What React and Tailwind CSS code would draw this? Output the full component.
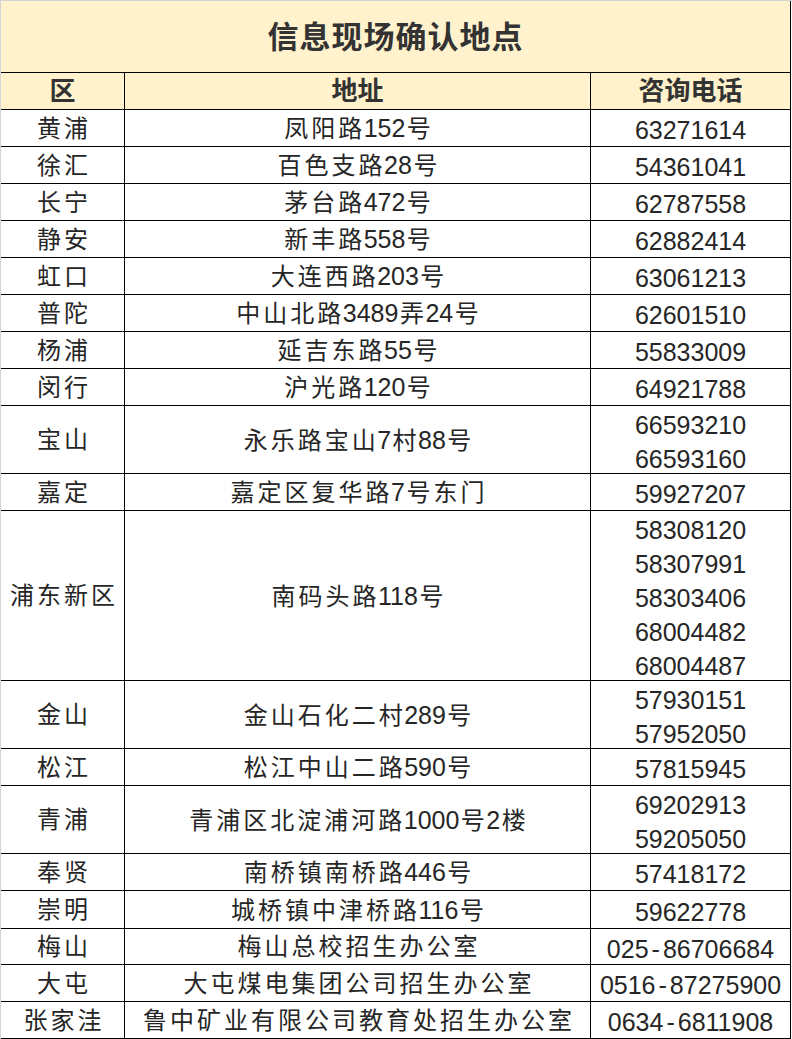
import React from "react";

const rows = [
  { d: "黄浦", a: "凤阳路152号", p: ["63271614"], h: "h-[37px]" },
  { d: "徐汇", a: "百色支路28号", p: ["54361041"], h: "h-[37px]" },
  { d: "长宁", a: "茅台路472号", p: ["62787558"], h: "h-[37px]" },
  { d: "静安", a: "新丰路558号", p: ["62882414"], h: "h-[37px]" },
  { d: "虹口", a: "大连西路203号", p: ["63061213"], h: "h-[37px]" },
  { d: "普陀", a: "中山北路3489弄24号", p: ["62601510"], h: "h-[37px]" },
  { d: "杨浦", a: "延吉东路55号", p: ["55833009"], h: "h-[37px]" },
  { d: "闵行", a: "沪光路120号", p: ["64921788"], h: "h-[37px]" },
  { d: "宝山", a: "永乐路宝山7村88号", p: ["66593210", "66593160"], h: "h-[68px]" },
  { d: "嘉定", a: "嘉定区复华路7号东门", p: ["59927207"], h: "h-[37px]" },
  { d: "浦东新区", a: "南码头路118号", p: ["58308120", "58307991", "58303406", "68004482", "68004487"], h: "h-[170px]" },
  { d: "金山", a: "金山石化二村289号", p: ["57930151", "57952050"], h: "h-[68px]" },
  { d: "松江", a: "松江中山二路590号", p: ["57815945"], h: "h-[37px]" },
  { d: "青浦", a: "青浦区北淀浦河路1000号2楼", p: ["69202913", "59205050"], h: "h-[68px]" },
  { d: "奉贤", a: "南桥镇南桥路446号", p: ["57418172"], h: "h-[37px]" },
  { d: "崇明", a: "城桥镇中津桥路116号", p: ["59622778"], h: "h-[38px]" },
  { d: "梅山", a: "梅山总校招生办公室", p: ["025-86706684"], h: "h-[36px]" },
  { d: "大屯", a: "大屯煤电集团公司招生办公室", p: ["0516-87275900"], h: "h-[37px]" },
  { d: "张家洼", a: "鲁中矿业有限公司教育处招生办公室", p: ["0634-6811908"], h: "h-[37px]" },
];

const font = { fontFamily: '"Liberation Sans", "Noto Sans CJK SC", sans-serif' };

function Mixed({ text }) {
  const parts = text.split(/([\u4e00-\u9fff]+)/).filter(Boolean);
  return (
    <span className="whitespace-nowrap">
      {parts.map((s, i) =>
        /[\u4e00-\u9fff]/.test(s) ? (
          <span key={i} className="text-[24px] tracking-[3px] ml-[1.5px] mr-[-1.5px]">{s}</span>
        ) : (
          <span key={i} className="text-[25px]">{s}</span>
        )
      )}
    </span>
  );
}

function Phone({ text }) {
  const parts = text.split("-");
  return (
    <div className="text-[25px] whitespace-nowrap">
      {parts.map((s, i) => (
        <React.Fragment key={i}>
          {i > 0 && <span className="inline-block mx-[3px]">-</span>}
          {s}
        </React.Fragment>
      ))}
    </div>
  );
}

export default function App() {
  return (
    <div className="w-[792px] h-[1039px] bg-white border-l border-t border-[#d4d4d4] overflow-hidden" style={font}>
      <div className="w-[790px] border-r border-black text-[#262626]">
        <div className="h-[72px] bg-[#fff2cc] border-b border-black flex items-center justify-center pt-[2px]">
          <span className="text-[31px] tracking-[1px] font-bold text-[#333333] leading-none">信息现场确认地点</span>
        </div>
        <div className="h-[37px] bg-[#fff2cc] border-b border-black flex text-[26px] font-bold text-[#333333]">
          <div className="w-[124px] border-r border-black flex items-center justify-center">区</div>
          <div className="w-[466px] border-r border-black flex items-center justify-center">地址</div>
          <div className="flex-1 flex items-center justify-center">咨询电话</div>
        </div>
        {rows.map((r, i) => (
          <div key={i} className={`${r.h} border-b border-black flex`}>
            <div className="w-[124px] border-r border-black flex items-center justify-center leading-[34px] pt-[4px]">
              <Mixed text={r.d} />
            </div>
            <div className="w-[466px] border-r border-black flex items-center justify-center leading-[34px] pt-[4px]">
              <Mixed text={r.a} />
            </div>
            <div className="flex-1 flex flex-col items-center justify-center leading-[34px] pt-[4px]">
              {r.p.map((p, j) => (
                <Phone key={j} text={p} />
              ))}
            </div>
          </div>
        ))}
      </div>
    </div>
  );
}
